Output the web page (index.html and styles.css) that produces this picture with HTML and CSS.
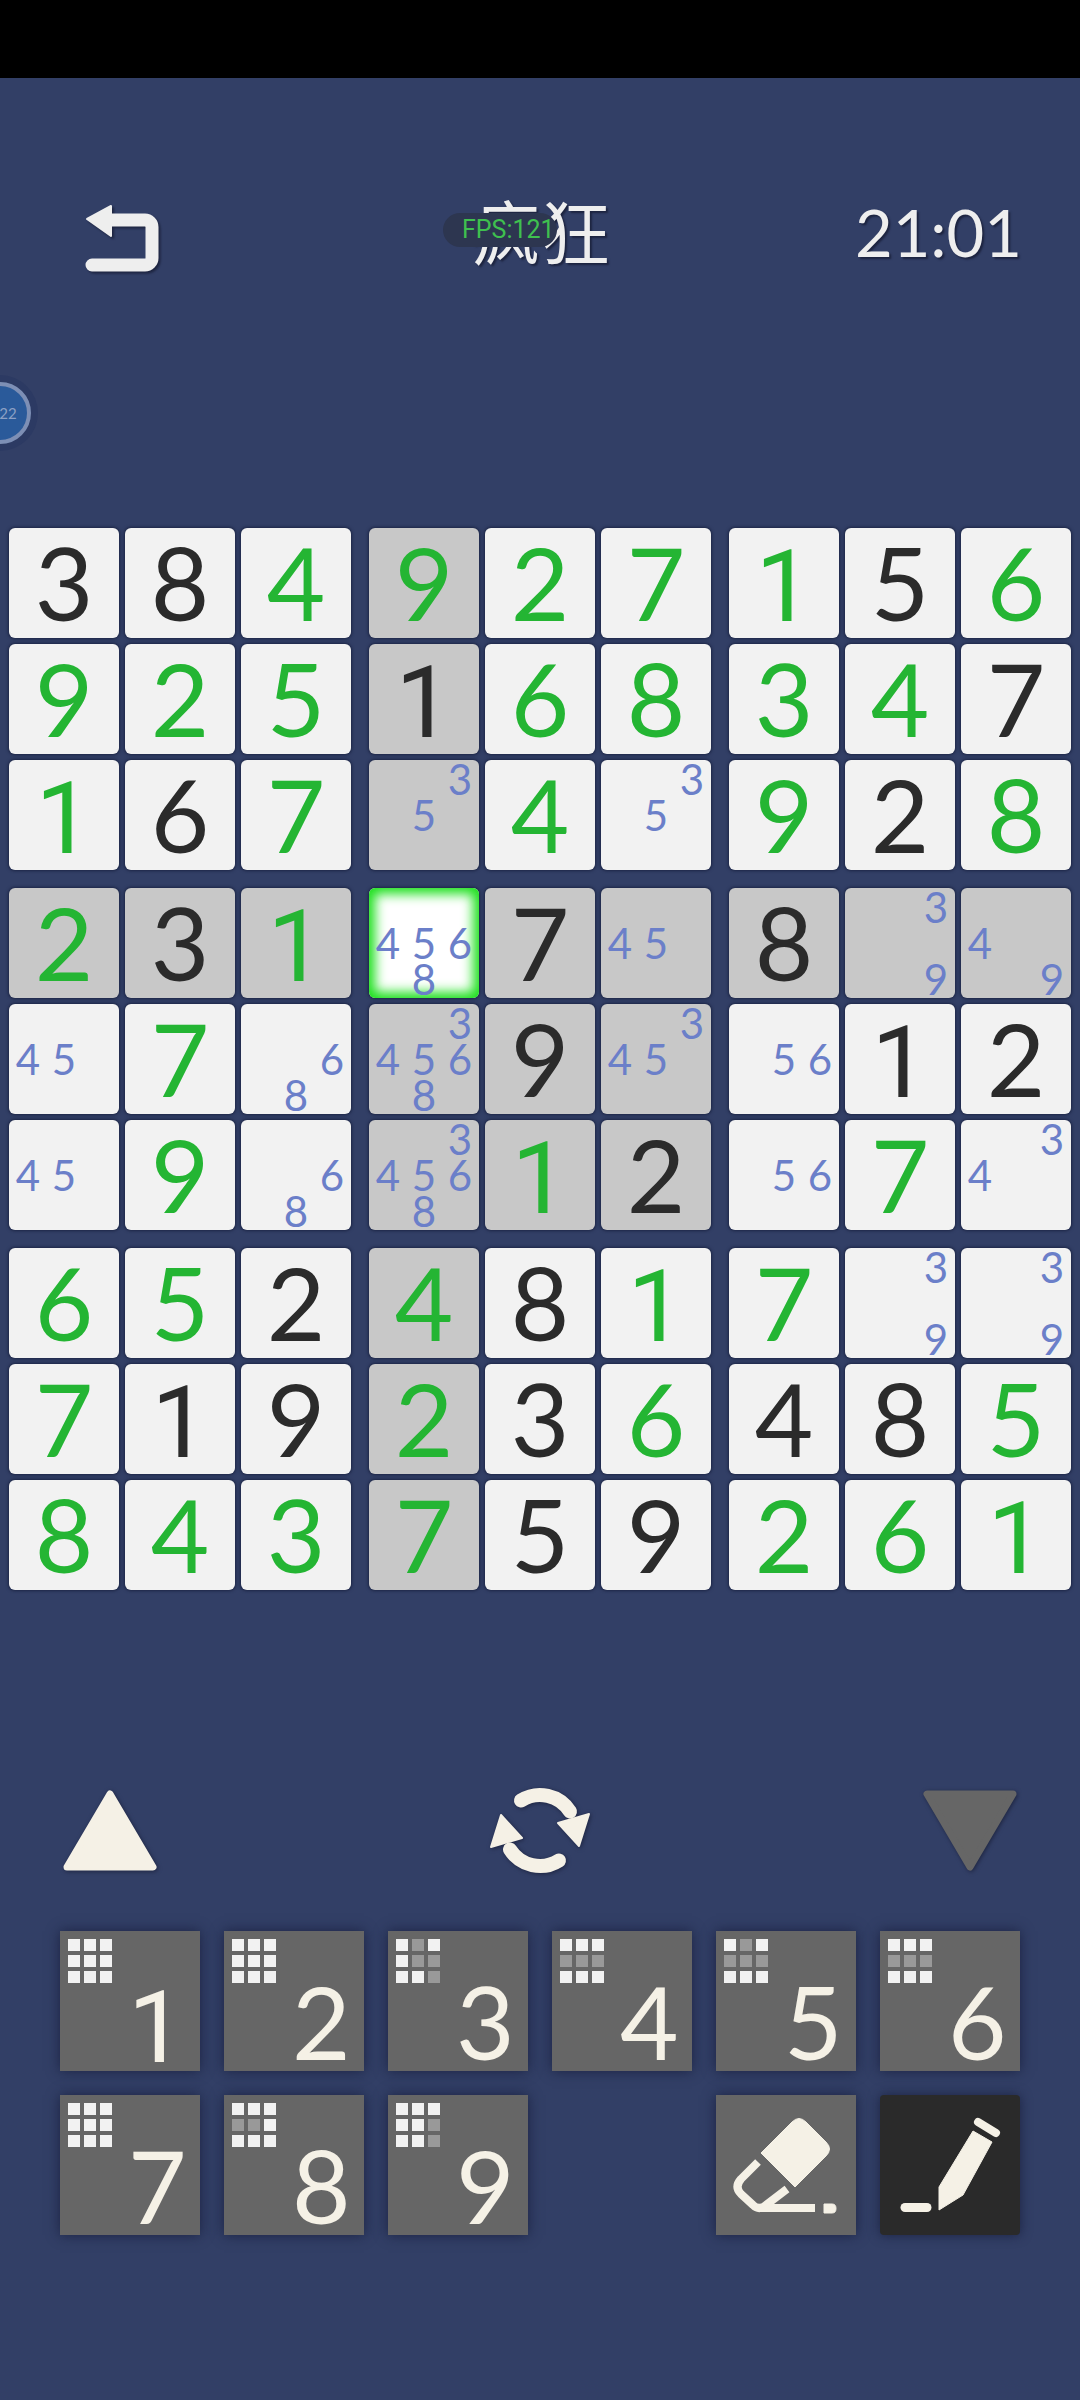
FILE: index.html
```html
<!DOCTYPE html>
<html lang="zh">
<head>
<meta charset="utf-8">
<title>疯狂</title>
<link rel="stylesheet" href="styles.css">
</head>
<body>
<div class="app">
  <div class="status"></div>
  <header class="header">
    <svg class="back" viewBox="0 0 74 68" aria-hidden="true"><path class="back-line" d="M24 16H60a7 7 0 0 1 7 7V54a7 7 0 0 1-7 7H7"/><path class="back-head" d="M26 2V32L2 15Z"/></svg>
    <div class="title-wrap"><span class="pill"></span><h1 class="title">疯狂</h1><span class="fps">FPS:121</span></div>
    <div class="time">21:01</div>
    <div class="bubble"><span class="bubble-text">22</span></div>
  </header>
  <main class="board">
    <section class="block">
      <div class="cell k">3</div><div class="cell k">8</div><div class="cell g">4</div>
      <div class="cell g">9</div><div class="cell g">2</div><div class="cell g">5</div>
      <div class="cell g d1">1</div><div class="cell k">6</div><div class="cell g">7</div>
    </section>
    <section class="block">
      <div class="cell g hl">9</div><div class="cell g">2</div><div class="cell g">7</div>
      <div class="cell k hl d1">1</div><div class="cell g">6</div><div class="cell g">8</div>
      <div class="cell notes hl"><b class="n3">3</b><b class="n5">5</b></div><div class="cell g">4</div><div class="cell notes"><b class="n3">3</b><b class="n5">5</b></div>
    </section>
    <section class="block">
      <div class="cell g d1">1</div><div class="cell k">5</div><div class="cell g">6</div>
      <div class="cell g">3</div><div class="cell g">4</div><div class="cell k">7</div>
      <div class="cell g">9</div><div class="cell k">2</div><div class="cell g">8</div>
    </section>
    <section class="block">
      <div class="cell g hl">2</div><div class="cell k hl">3</div><div class="cell g hl d1">1</div>
      <div class="cell notes"><b class="n4">4</b><b class="n5">5</b></div><div class="cell g">7</div><div class="cell notes"><b class="n6">6</b><b class="n8">8</b></div>
      <div class="cell notes"><b class="n4">4</b><b class="n5">5</b></div><div class="cell g">9</div><div class="cell notes"><b class="n6">6</b><b class="n8">8</b></div>
    </section>
    <section class="block">
      <div class="cell notes sel"><b class="n4">4</b><b class="n5">5</b><b class="n6">6</b><b class="n8">8</b></div><div class="cell k hl">7</div><div class="cell notes hl"><b class="n4">4</b><b class="n5">5</b></div>
      <div class="cell notes hl"><b class="n3">3</b><b class="n4">4</b><b class="n5">5</b><b class="n6">6</b><b class="n8">8</b></div><div class="cell k hl">9</div><div class="cell notes hl"><b class="n3">3</b><b class="n4">4</b><b class="n5">5</b></div>
      <div class="cell notes hl"><b class="n3">3</b><b class="n4">4</b><b class="n5">5</b><b class="n6">6</b><b class="n8">8</b></div><div class="cell g hl d1">1</div><div class="cell k hl">2</div>
    </section>
    <section class="block">
      <div class="cell k hl">8</div><div class="cell notes hl"><b class="n3">3</b><b class="n9">9</b></div><div class="cell notes hl"><b class="n4">4</b><b class="n9">9</b></div>
      <div class="cell notes"><b class="n5">5</b><b class="n6">6</b></div><div class="cell k d1">1</div><div class="cell k">2</div>
      <div class="cell notes"><b class="n5">5</b><b class="n6">6</b></div><div class="cell g">7</div><div class="cell notes"><b class="n3">3</b><b class="n4">4</b></div>
    </section>
    <section class="block">
      <div class="cell g">6</div><div class="cell g">5</div><div class="cell k">2</div>
      <div class="cell g">7</div><div class="cell k d1">1</div><div class="cell k">9</div>
      <div class="cell g">8</div><div class="cell g">4</div><div class="cell g">3</div>
    </section>
    <section class="block">
      <div class="cell g hl">4</div><div class="cell k">8</div><div class="cell g d1">1</div>
      <div class="cell g hl">2</div><div class="cell k">3</div><div class="cell g">6</div>
      <div class="cell g hl">7</div><div class="cell k">5</div><div class="cell k">9</div>
    </section>
    <section class="block">
      <div class="cell g">7</div><div class="cell notes"><b class="n3">3</b><b class="n9">9</b></div><div class="cell notes"><b class="n3">3</b><b class="n9">9</b></div>
      <div class="cell k">4</div><div class="cell k">8</div><div class="cell g">5</div>
      <div class="cell g">2</div><div class="cell g">6</div><div class="cell g d1">1</div>
    </section>
  </main>
  <div class="controls">
    <svg class="tri" viewBox="0 0 94 81" aria-hidden="true"><path class="tri-up" d="M47 4L90 77H4Z"/></svg>
    <svg class="cycle" viewBox="0 0 100 85" aria-hidden="true">
      <g id="half"><path class="cycle-arc" d="M31 12.500A35.500 35.500 0 0 1 80 23.500"/><path class="cycle-head" d="M99 26L89 58L68 35Z"/></g>
      <use href="#half" transform="rotate(180 50 42.5)"/>
    </svg>
    <svg class="tri" viewBox="0 0 94 81" aria-hidden="true"><path class="tri-down" d="M4 4H90L47 77Z"/></svg>
  </div>
  <div class="keypad">
    <div class="key"><div class="mini"><i></i><i></i><i></i><i></i><i></i><i></i><i></i><i></i><i></i></div><span class="key-num d1">1</span></div>
    <div class="key"><div class="mini"><i></i><i></i><i></i><i></i><i></i><i></i><i></i><i></i><i></i></div><span class="key-num">2</span></div>
    <div class="key"><div class="mini"><i></i><i class="d"></i><i></i><i></i><i class="d"></i><i class="d"></i><i></i><i></i><i class="d"></i></div><span class="key-num">3</span></div>
    <div class="key"><div class="mini"><i></i><i></i><i></i><i class="d"></i><i class="d"></i><i class="d"></i><i></i><i></i><i></i></div><span class="key-num">4</span></div>
    <div class="key"><div class="mini"><i></i><i class="d"></i><i></i><i class="d"></i><i class="d"></i><i class="d"></i><i></i><i></i><i></i></div><span class="key-num">5</span></div>
    <div class="key"><div class="mini"><i></i><i></i><i></i><i class="d"></i><i class="d"></i><i class="d"></i><i></i><i></i><i></i></div><span class="key-num">6</span></div>
    <div class="key"><div class="mini"><i></i><i></i><i></i><i></i><i></i><i></i><i></i><i></i><i></i></div><span class="key-num">7</span></div>
    <div class="key"><div class="mini"><i></i><i></i><i></i><i class="d"></i><i class="d"></i><i></i><i></i><i></i><i></i></div><span class="key-num">8</span></div>
    <div class="key"><div class="mini"><i></i><i></i><i></i><i></i><i></i><i class="d"></i><i></i><i></i><i class="d"></i></div><span class="key-num">9</span></div>
    <div class="key tool eraser">
      <svg class="tool-icon" viewBox="0 0 140 140" aria-hidden="true">
        <path class="fill" d="M45 58L76 27Q83 20 90 27L110 47Q117 54 110 61L79 92Z"/>
        <path class="line" d="M42 67L25 84Q18 92 25 99L37 110Q43 116 50 110L71 94"/>
        <path class="line" d="M44 113H99"/>
        <path class="fill" d="M108 109H116Q120 109 120 113.500Q120 118 116 118H108Z"/>
      </svg>
    </div>
    <div class="key tool pencil">
      <svg class="tool-icon" viewBox="0 0 140 140" aria-hidden="true">
        <path class="fill" d="M59 92L93 36L112 47L83 100L59 115Z"/>
        <path class="cap" d="M98 27L116 38"/>
        <path class="dash" d="M25 112.500H47"/>
      </svg>
    </div>
  </div>
</div>
</body>
</html>
```
FILE: styles.css
```css
* { box-sizing: border-box; }
html, body { margin: 0; padding: 0; }
body { background: #323f66; font-family: "Lato", "Noto Sans", sans-serif; }
.app { width: 1080px; height: 2400px; display: flex; flex-direction: column; overflow: hidden; }
.status { height: 78px; background: #000; flex: none; }

.header { position: relative; height: 450px; flex: none; padding: 112px 61px 0; display: grid; grid-template-columns: 1fr auto 1fr; align-items: start; color: #eeeeee; }
.back { width: 74px; height: 68px; margin: 14px 0 0 24px; overflow: visible; filter: drop-shadow(2px 2px 1px #1d2440); }
.back-line { fill: none; stroke: #eeeeee; stroke-width: 13; stroke-linecap: round; }
.back-head { fill: #eeeeee; stroke: #eeeeee; stroke-width: 2; stroke-linejoin: round; }
.title-wrap { position: relative; }
.title { margin: 2px 0 0; font-family: "Noto Sans CJK SC", sans-serif; font-weight: 400; font-size: 70px; line-height: 76px; text-shadow: 2px 2px 2px #1d2440; }
.pill { position: absolute; left: -27px; top: 23px; width: 114px; height: 34px; border-radius: 17px; background: #2d3650; }
.fps { position: absolute; left: -8px; top: 23px; font-family: "Roboto", sans-serif; font-size: 25px; line-height: 34px; color: #3fc04f; }
.time { justify-self: end; margin: 4px -3px 0 0; font-size: 65px; font-weight: 400; line-height: 76px; text-shadow: 2px 2px 2px #1d2440; }
.bubble { position: absolute; left: -38px; top: 297px; width: 76px; height: 76px; border-radius: 50%; background: #2c3a63; display: flex; align-items: center; justify-content: center; }
.bubble::before { content: ""; position: absolute; inset: 7px; border-radius: 50%; background: #2a5a9a; border: 4px solid #7d8fb5; }
.bubble-text { position: relative; font-size: 15px; color: #8ca0c4; margin-left: 16px; }

.board { flex: none; padding-left: 9px; display: grid; grid-template-columns: repeat(3, 342px); grid-auto-rows: 342px; column-gap: 18px; row-gap: 18px; }
.block { display: grid; grid-template-columns: repeat(3, 110px); grid-template-rows: repeat(3, 110px); gap: 6px; }
.cell { width: 110px; height: 110px; padding-bottom: 2px; border-radius: 6px; background: #f2f2f2; box-shadow: 0 0 3px 1px #1c2545; display: flex; align-items: center; justify-content: center; font-size: 101px; line-height: 108px; }
.g { color: #24b533; }
.k { color: #2b2b2b; }
.hl { background: #c8c8c8; }
.d1 { font-family: "Roboto", sans-serif; }
.cell.d1 { padding: 7px 0 0; }
.notes { display: grid; grid-template-columns: repeat(3, 36px); grid-template-rows: repeat(3, 36px); padding: 1px; }
.notes b { font-weight: 400; font-size: 42px; line-height: 36px; text-align: center; color: #6b7fc9; }
.sel { background: #fff; box-shadow: inset 0 0 12px 6px #1de01d, 0 0 3px 1px #1c2545; }
.n3 { grid-area: 1 / 3; }
.n4 { grid-area: 2 / 1; }
.n5 { grid-area: 2 / 2; }
.n6 { grid-area: 2 / 3; }
.n8 { grid-area: 3 / 2; }
.n9 { grid-area: 3 / 3; }

.controls { flex: none; margin-top: 198px; height: 85px; padding: 0 63px; display: flex; align-items: center; justify-content: space-between; }
.tri { width: 94px; height: 81px; filter: drop-shadow(1px 1px 2px #1d2440); }
.tri-up { fill: #f5f1e6; stroke: #f5f1e6; stroke-width: 7; stroke-linejoin: round; }
.tri-down { fill: #666666; stroke: #666666; stroke-width: 7; stroke-linejoin: round; }
.cycle { width: 100px; height: 85px; overflow: visible; filter: drop-shadow(1px 1px 2px #1d2440); }
.cycle-arc { fill: none; stroke: #f5f1e6; stroke-width: 14; stroke-linecap: round; }
.cycle-head { fill: #f5f1e6; stroke: #f5f1e6; stroke-width: 2; stroke-linejoin: round; }

.keypad { flex: none; margin-top: 58px; padding-left: 60px; display: grid; grid-template-columns: repeat(6, 140px); grid-auto-rows: 140px; gap: 24px; }
.key { position: relative; background: #666666; box-shadow: 0 0 12px rgba(20, 25, 55, .75); padding: 8px; display: flex; flex-direction: column; }
.mini { width: 44px; display: grid; grid-template-columns: repeat(3, 12px); grid-auto-rows: 12px; gap: 4px; flex: none; }
.mini i { background: #f2f2f2; display: block; }
.mini i.d { background: #999999; }
.key-num { align-self: flex-end; width: 48px; margin: 2px 16px 0 0; font-size: 101px; line-height: 73px; text-align: center; color: #f5f1e6; }
.key-num.d1 { margin-top: 8px; }
.tool { padding: 0; }
.eraser { grid-column: 5; }
.pencil { background: #2a2a2a; border-radius: 4px; }
.tool-icon { width: 140px; height: 140px; display: block; }
.fill { fill: #f5f1e6; stroke: #f5f1e6; stroke-width: 1; stroke-linejoin: round; }
.line { fill: none; stroke: #f5f1e6; stroke-width: 8; stroke-linejoin: round; }
.cap { fill: none; stroke: #f5f1e6; stroke-width: 8; stroke-linecap: round; }
.dash { fill: none; stroke: #f5f1e6; stroke-width: 9; stroke-linecap: round; }
```
